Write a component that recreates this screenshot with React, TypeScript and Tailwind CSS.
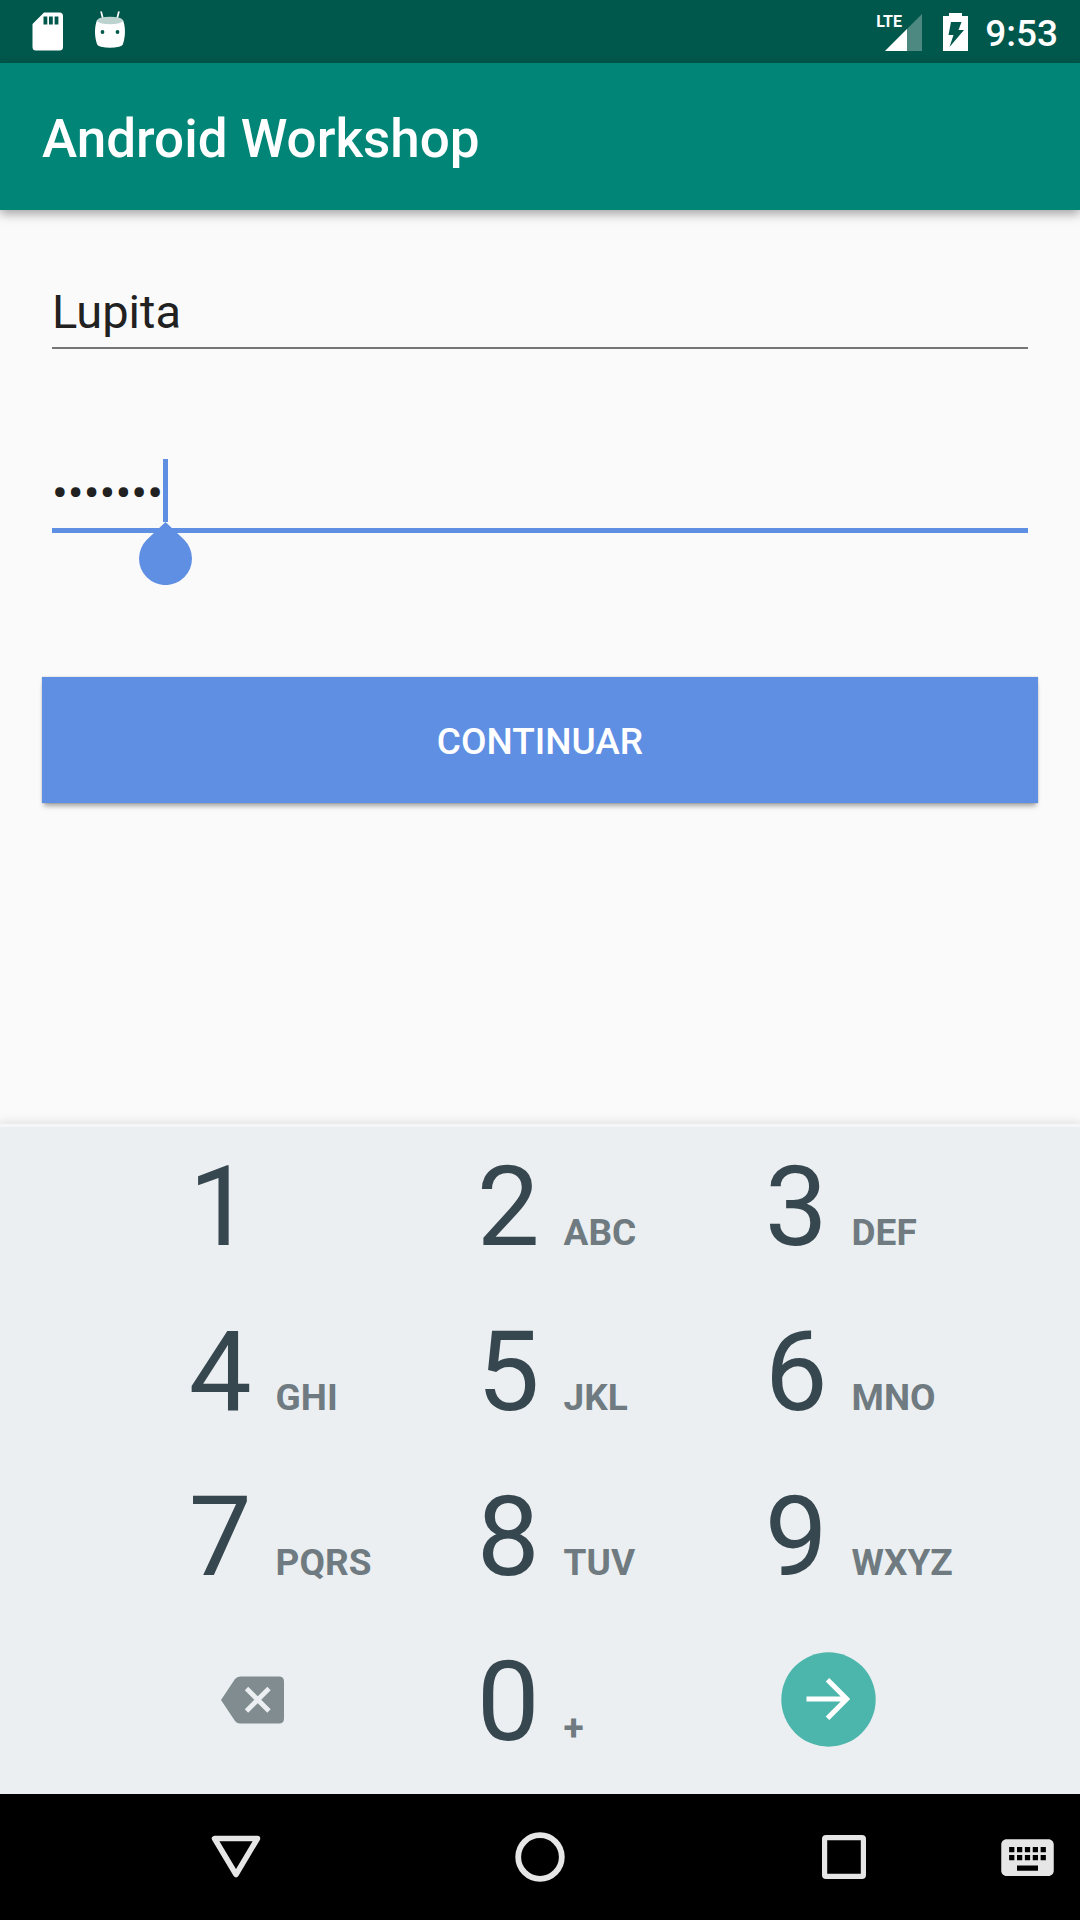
import React from "react";

type KeyDef = { digit: string; letters?: string };

const keys: KeyDef[] = [
  { digit: "1" },
  { digit: "2", letters: "ABC" },
  { digit: "3", letters: "DEF" },
  { digit: "4", letters: "GHI" },
  { digit: "5", letters: "JKL" },
  { digit: "6", letters: "MNO" },
  { digit: "7", letters: "PQRS" },
  { digit: "8", letters: "TUV" },
  { digit: "9", letters: "WXYZ" },
];

function SdCardIcon() {
  return (
    <svg width="32" height="39" viewBox="0 0 32 39" fill="none" aria-hidden="true">
      <path
        fillRule="evenodd"
        fill="#fff"
        d="M12 0.5H27.500a3.500 3.500 0 0 1 3.500 3.500V35a3.500 3.500 0 0 1-3.500 3.500H4A3.500 3.500 0 0 1 .5 35V12ZM11.500 4.500v8h3.800v-8ZM17 4.500v8h3.800v-8ZM22.600 4.500v8h3.800v-8Z"
      />
    </svg>
  );
}

function AndroidHeadIcon() {
  return (
    <svg width="32" height="42" viewBox="0 0 32 42" fill="none" aria-hidden="true">
      <path d="M7.200 1 9 8M24.800 1 23 8" stroke="#fff" strokeWidth="1.700" strokeLinecap="round" />
      <path
        fill="#fff"
        d="M3 9C.4 16 .3 25 3 33c.5 1.500 2 2.200 4 2.700 6 1.400 12 1.400 18 0 2-.5 3.500-1.200 4-2.700 2.700-8 2.600-17 0-24Z"
      />
      <ellipse cx="16" cy="9.500" rx="12.800" ry="3.800" fill="#bcd2ce" />
      <circle cx="8.500" cy="21" r="1.900" fill="#00574b" />
      <circle cx="23.500" cy="21" r="1.900" fill="#00574b" />
    </svg>
  );
}

function SignalIcon() {
  return (
    <div className="relative h-[38px] w-[46px]">
      <svg className="absolute bottom-0 right-0" width="37" height="37" viewBox="0 0 37 37" aria-hidden="true">
        <path d="M37 0V37H0Z" fill="#fff" fillOpacity="0.3" />
        <path d="M22 15V37H0Z" fill="#fff" />
      </svg>
      <span className="absolute left-0 top-0 text-[16px] font-bold leading-[18px] text-white">LTE</span>
    </div>
  );
}

function BatteryIcon() {
  return (
    <svg width="25" height="38" viewBox="0 0 25 38" aria-hidden="true">
      <path d="M6 0H19V3H25V38H0V3H6Z" fill="#fff" />
      <path d="M8 9H18.500L15.500 17H21L6.500 34 10.500 22H5.500Z" fill="#00574b" />
    </svg>
  );
}

function DigitKey({ digit, letters }: KeyDef) {
  return (
    <button type="button" className="flex items-center pb-1.5 pl-[28%]">
      <span className="flex items-baseline gap-6 text-[112px] leading-[132px] text-[#37474f]">
        {digit}
        {letters && <span className="text-[37px] font-bold leading-none text-[#6f7b80]">{letters}</span>}
      </span>
    </button>
  );
}

export default function App() {
  return (
    <div className="flex min-h-screen flex-col bg-[#fafafa] font-['Roboto',sans-serif]">
      <div className="flex h-[63px] items-center bg-[#00574b] pl-8 pr-[22px]">
        <div className="flex items-center gap-[30px]">
          <SdCardIcon />
          <AndroidHeadIcon />
        </div>
        <div className="ml-auto flex items-center gap-[21px]">
          <SignalIcon />
          <BatteryIcon />
          <time className="-ml-1 pt-1 text-[37px] font-medium leading-[44px] text-white">9:53</time>
        </div>
      </div>

      <header className="relative flex h-[147px] items-center bg-[#008577] px-[42px] pt-1 shadow-[0_4px_10px_rgba(0,0,0,0.35)]">
        <h1 className="text-[53px] font-medium leading-[62px] text-white">Android Workshop</h1>
      </header>

      <main className="flex-1 px-[42px] pt-[70px]">
        <form onSubmit={(e) => e.preventDefault()}>
          <div className="px-[10px]">
            <input
              type="text"
              aria-label="Nombre"
              defaultValue="Lupita"
              className="block h-[69px] w-full border-b-2 border-[#757575] bg-transparent pb-[3px] text-[47px] text-[#212121] outline-none"
            />
            <div className="relative mt-[110px]">
              <input
                type="password"
                aria-label="Contraseña"
                defaultValue="1234567"
                className="block h-[74px] w-full border-b-[5px] border-[#5f8fe3] bg-transparent pb-[3px] text-[47px] text-[#212121] outline-none"
              />
              <div className="absolute left-[111px] top-0 h-[63px] w-[5px] bg-[#5f8fe3]" />
              <svg className="absolute left-[87px] top-[63px]" width="53" height="63" viewBox="0 0 53 63" aria-hidden="true">
                <path d="M26.500 0 45.200 17.800A26.500 26.500 0 1 1 7.800 17.800Z" fill="#5f8fe3" />
              </svg>
            </div>
          </div>
          <button
            type="submit"
            className="mt-36 block h-[126px] w-full bg-[#5f8fe3] pt-[3px] text-[37px] font-medium text-white shadow-[0_5px_5px_-2px_rgba(0,0,0,0.35),0_0_2px_rgba(0,0,0,0.2)]"
          >
            CONTINUAR
          </button>
        </form>
      </main>

      <section
        aria-label="Teclado"
        className="border-t-[3px] border-[#f5f6f7] bg-[#ebeff2] px-[10%] pb-[7px] shadow-[0_0_10px_2px_rgba(0,0,0,0.1)]"
      >
        <div className="grid auto-rows-[165px] grid-cols-3">
          {keys.map((k) => (
            <DigitKey key={k.digit} {...k} />
          ))}
          <button type="button" aria-label="Borrar" className="flex items-center justify-center pb-2.5">
            <svg width="63" height="48" viewBox="0 0 63 48" aria-hidden="true">
              <path
                fill="#818c90"
                d="M0 24 14 3Q16 .5 19 .5H58Q63 .5 63 5.500V42.500Q63 47.500 58 47.500H19Q16 47.500 14 45Z"
              />
              <path d="M25.500 12.500 48 35M48 12.500 25.500 35" stroke="#ebeff2" strokeWidth="4.800" />
            </svg>
          </button>
          <DigitKey digit="0" letters="+" />
          <button type="button" aria-label="Siguiente" className="flex items-center justify-center pb-2.5">
            <svg width="95" height="95" viewBox="0 0 95 95" fill="none" aria-hidden="true">
              <circle cx="47.500" cy="47.500" r="47.200" fill="#4db6ac" />
              <path d="M25.500 47H65M46.500 27.800 65.700 47 46.500 66.200" stroke="#fff" strokeWidth="5" />
            </svg>
          </button>
        </div>
      </section>

      <nav className="relative grid h-[126px] grid-cols-[84px_1fr_1fr_1fr_84px] items-center bg-black">
        <span />
        <button type="button" aria-label="Atrás" className="flex justify-center">
          <svg width="50" height="44" viewBox="0 0 50 44" fill="none" aria-hidden="true">
            <path d="M3.500 3.500H46.500L25 39.500Z" stroke="#e6e6e6" strokeWidth="5.500" strokeLinejoin="round" />
          </svg>
        </button>
        <button type="button" aria-label="Inicio" className="flex justify-center">
          <svg width="50" height="50" viewBox="0 0 50 50" fill="none" aria-hidden="true">
            <circle cx="25" cy="25" r="21.800" stroke="#e6e6e6" strokeWidth="5.800" />
          </svg>
        </button>
        <button type="button" aria-label="Recientes" className="flex justify-center">
          <svg width="44" height="44" viewBox="0 0 44 44" fill="none" aria-hidden="true">
            <rect x="2.600" y="2.600" width="38.800" height="38.800" rx="1.500" stroke="#e6e6e6" strokeWidth="5.200" />
          </svg>
        </button>
        <button type="button" aria-label="Cambiar teclado" className="flex">
          <svg width="63" height="63" viewBox="0 0 24 24" fill="#e6e6e6" aria-hidden="true">
            <path d="M20 5H4c-1.100 0-1.990.9-1.990 2L2 17c0 1.100.9 2 2 2h16c1.100 0 2-.9 2-2V7c0-1.100-.9-2-2-2zm-9 3h2v2h-2V8zm0 3h2v2h-2v-2zM8 8h2v2H8V8zm0 3h2v2H8v-2zm-1 2H5v-2h2v2zm0-3H5V8h2v2zm9 7H8v-2h8v2zm0-4h-2v-2h2v2zm0-3h-2V8h2v2zm3 3h-2v-2h2v2zm0-3h-2V8h2v2z" />
          </svg>
        </button>
      </nav>
    </div>
  );
}
